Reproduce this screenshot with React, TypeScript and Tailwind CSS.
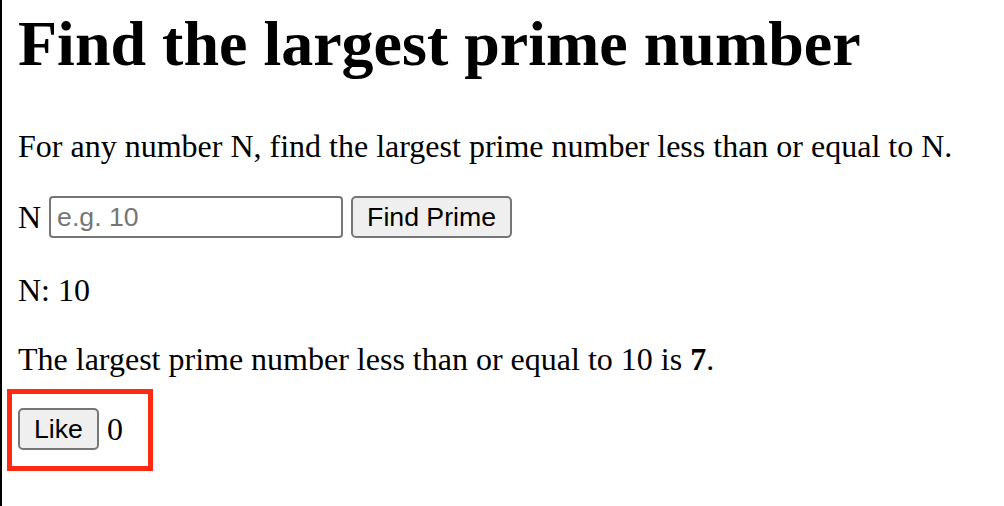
import { useState } from "react";

export default function App() {
  const [value, setValue] = useState("");
  const [likes, setLikes] = useState(0);

  return (
    <div className="relative min-h-screen border-l-2 border-black bg-white pl-4 text-black font-['Liberation_Serif',serif]">
      <h1 className="pt-[7px] text-[64px] font-bold leading-[74px]">
        Find the largest prime number
      </h1>

      <p className="mt-[47px] text-[32px] leading-[37px]">
        For any number N, find the largest prime number less than or equal to N.
      </p>

      {/* Input row */}
      <div className="mt-[31px] flex h-[42px] items-center text-[32px] leading-[37px]">
        <label htmlFor="n">N</label>
        <input
          id="n"
          value={value}
          onChange={(e) => setValue(e.target.value)}
          placeholder="e.g. 10"
          className="ml-[8px] h-[42px] w-[294px] rounded-[4px] border-2 border-[#767676] px-[6px] font-['Liberation_Sans',sans-serif] text-[26.67px] placeholder:text-[#757575]"
        />
        <button className="ml-[8px] h-[42px] rounded-[5px] border-2 border-[#767676] bg-[#efefef] px-[14px] font-['Liberation_Sans',sans-serif] text-[26.67px] leading-none">
          Find Prime
        </button>
      </div>

      <p className="mt-[34px] text-[32px] leading-[37px]">N: 10</p>

      <p className="mt-[32px] text-[32px] leading-[37px]">
        The largest prime number less than or equal to 10 is <b>7</b>.
      </p>

      {/* Like row */}
      <div className="mt-[30px] flex h-[42px] items-center text-[32px] leading-[37px]">
        <button
          onClick={() => setLikes(likes + 1)}
          className="h-[42px] rounded-[5px] border-2 border-[#767676] bg-[#efefef] px-[14px] font-['Liberation_Sans',sans-serif] text-[26.67px] leading-none"
        >
          Like
        </button>
        <span className="ml-[8px]">{likes}</span>
      </div>

      {/* Annotation box */}
      <div className="pointer-events-none absolute left-[5px] top-[389px] h-[82px] w-[146px] border-[5px] border-[#ff2a12]" />
    </div>
  );
}
